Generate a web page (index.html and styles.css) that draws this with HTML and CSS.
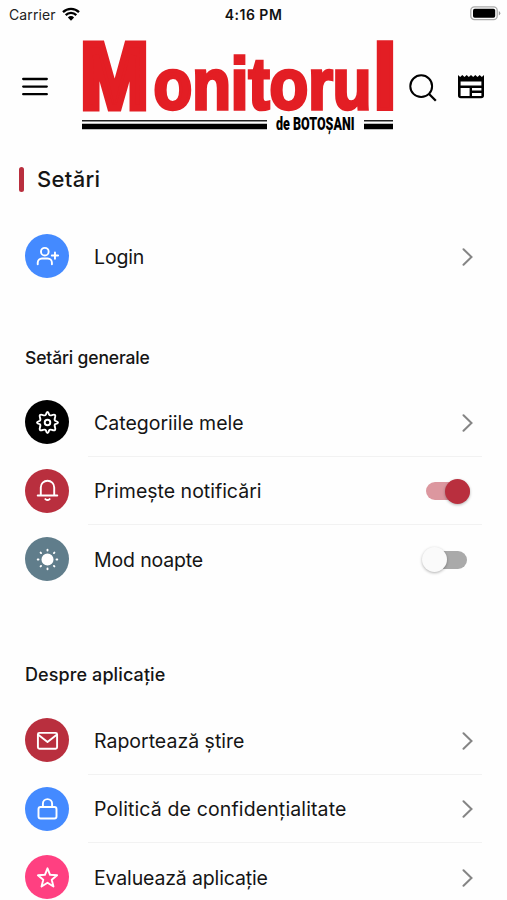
FILE: index.html
```html
<!DOCTYPE html>
<html lang="ro">
<head>
<meta charset="utf-8">
<title>Setări</title>
<link rel="stylesheet" href="styles.css">
</head>
<body>
<div class="screen">
  <div class="status">
    <div class="carrier">Carrier
      <svg width="18" height="14" viewBox="0 0 18 14"><path d="M1 5.1a11.4 11.4 0 0 1 16 0M3.7 8.1a7.5 7.5 0 0 1 10.6 0" fill="none" stroke="#000" stroke-width="2.3"/><path d="M9 13.7 5.9 10.4a4.4 4.4 0 0 1 6.2 0Z"/></svg>
    </div>
    <div class="clock">4:16 PM</div>
    <svg class="battery" width="31" height="15" viewBox="0 0 31 15"><rect x=".8" y=".8" width="26.4" height="12.8" rx="3.6" fill="#fff" stroke="#aaa" stroke-width="1.3"/><rect x="3" y="2.7" width="22.2" height="9" rx="1.7"/><path d="M28.8 5v4.5q1.5-.7 1.5-2.2T28.8 5Z" fill="#999"/></svg>
  </div>

  <header class="header">
    <svg class="menu" width="26" height="20" viewBox="0 0 26 20"><path d="M1.2 2h23.6M1.2 9.6h23.6M1.2 17.2h23.6" stroke="#000" stroke-width="2.3" stroke-linecap="round"/></svg>
    <svg class="logo" width="314" height="98" viewBox="0 0 314 98">
      <text class="brand"><tspan class="brand-m" x="-.5" y="69.5" textLength="68" lengthAdjust="spacingAndGlyphs">M</tspan><tspan class="brand-mid" x="72.5" y="71.3" textLength="218" lengthAdjust="spacingAndGlyphs">onitoru</tspan><tspan class="brand-l" x="291" y="71.3" textLength="26" lengthAdjust="spacingAndGlyphs">l</tspan></text>
      <path d="M1 82.7h185M283 82.7h29" stroke="#222" stroke-width="1.6"/>
      <path d="M1 88.5h185M283 88.5h29" stroke="#000" stroke-width="5.4"/>
      <text class="place" x="195" y="92" textLength="78.5" lengthAdjust="spacingAndGlyphs">de BOTOŞANI</text>
    </svg>
    <svg class="search" width="28" height="28" viewBox="0 0 28 28"><g fill="none" stroke="#000" stroke-width="2"><circle cx="12.2" cy="12.2" r="10.9"/><path d="m19.8 19.8 7 7" stroke-width="2.3"/></g></svg>
    <svg class="paper" width="26" height="24" viewBox="0 0 26 24"><path d="M0 0 2.2 2 4.3 0 6.5 2 8.7 0 10.8 2 13 0l2.2 2 2.1-2 2.2 2 2.2-2 2.1 2L26 0v20.5a2.8 2.8 0 0 1-2.8 2.8H2.8A2.8 2.8 0 0 1 0 20.5Z"/><path d="M2.6 6.5h20.8v4H2.6ZM2.6 13h9v8h-9ZM14 13h9.4v2.6H14ZM14 18h9.4v3H14Z" fill="#fff"/></svg>
  </header>

  <h1 class="title">Setări</h1>

  <section class="group account">
    <div class="row">
      <span class="badge blue"><svg viewBox="0 0 24 24"><circle cx="9.2" cy="7" r="4"/><path d="M1.8 20v-1.6a4.4 4.4 0 0 1 4.4-4.4h6a4.4 4.4 0 0 1 4.4 4.4V20M19.8 7.7v6.6M16.5 11h6.6"/></svg></span>
      <div class="line"><span class="label login">Login</span><svg class="chevron" viewBox="0 0 11 18"><path d="m1.5 1.2 8 7.8-8 7.8"/></svg></div>
    </div>
  </section>

  <section class="group general">
    <h2 class="heading">Setări generale</h2>
    <div class="row">
      <span class="badge black"><svg viewBox="0 0 24 24"><circle cx="12" cy="12" r="2.9"/><path d="M10.3 3.8Q12-1.8 13.7 3.8 14.3 5 16.6 4.3 21.5 2.5 19.7 7.4 19 9.7 20.2 10.3 25.8 12 20.2 13.7 19 14.3 19.7 16.6 21.5 21.5 16.6 19.7 14.3 19 13.7 20.2 12 25.8 10.3 20.2 9.7 19 7.4 19.7 2.5 21.5 4.3 16.6 5 14.3 3.8 13.7-1.8 12 3.8 10.3 5 9.7 4.3 7.4 2.5 2.5 7.4 4.3 9.7 5 10.3 3.8Z"/></svg></span>
      <div class="line"><span class="label categories">Categoriile mele</span><svg class="chevron" viewBox="0 0 11 18"><path d="m1.5 1.2 8 7.8-8 7.8"/></svg></div>
    </div>
    <div class="row">
      <span class="badge red"><svg viewBox="0 0 24 24"><path d="M5 17V8.8a7 7 0 0 1 14 0V17M1.8 17.2h20.4M9.8 21q2.2 2 4.4 0"/></svg></span>
      <div class="line"><span class="label notify">Primește notificări</span><span class="switch on"></span></div>
    </div>
    <div class="row">
      <span class="badge slate"><svg viewBox="0 0 24 24"><circle cx="12" cy="12" r="5.3" fill="#fff"/><path d="M12 1.8v.8M12 21.4v.8M1.8 12h.8M21.4 12h.8M4.8 4.8l.5.5M18.7 18.7l.5.5M4.8 19.2l.5-.5M18.7 5.3l.5-.5"/></svg></span>
      <div class="line"><span class="label night">Mod noapte</span><span class="switch off"></span></div>
    </div>
  </section>

  <section class="group about">
    <h2 class="heading">Despre aplicație</h2>
    <div class="row">
      <span class="badge red"><svg viewBox="0 0 24 24"><rect x="2" y="4" width="20" height="16.6" rx="1.5"/><path d="m2.4 6 9.6 7.5L21.6 6"/></svg></span>
      <div class="line"><span class="label report">Raportează știre</span><svg class="chevron" viewBox="0 0 11 18"><path d="m1.5 1.2 8 7.8-8 7.8"/></svg></div>
    </div>
    <div class="row">
      <span class="badge blue"><svg viewBox="0 0 24 24"><rect x="2.6" y="10.5" width="18.8" height="12" rx="2.2"/><path d="M7.2 10.5V7a4.8 4.8 0 0 1 9.6 0v3.5"/></svg></span>
      <div class="line"><span class="label privacy">Politică de confidențialitate</span><svg class="chevron" viewBox="0 0 11 18"><path d="m1.5 1.2 8 7.8-8 7.8"/></svg></div>
    </div>
    <div class="row">
      <span class="badge pink"><svg viewBox="0 0 24 24"><path d="M12 2.4 14.7 9.2 22 9.7 16.4 14.3 18.2 21.4 12 17.5 5.8 21.4 7.6 14.3 2 9.7 9.3 9.2Z"/></svg></span>
      <div class="line"><span class="label rate">Evaluează aplicație</span><svg class="chevron" viewBox="0 0 11 18"><path d="m1.5 1.2 8 7.8-8 7.8"/></svg></div>
    </div>
  </section>
</div>
</body>
</html>
```
FILE: styles.css
```css
* { box-sizing: border-box; }
body { margin: 0; background: #fefefe; color: #151515; font-family: Inter, "Liberation Sans", sans-serif; }
svg { display: block; flex: none; }
.screen { width: 507px; height: 900px; overflow: hidden; }

.status { display: grid; grid-template-columns: 1fr auto 1fr; height: 28px; align-items: center; padding: 0 6px 0 9px; }
.carrier { display: flex; align-items: center; gap: 6px; font-size: 14px; letter-spacing: .1px; color: #222; }
.clock { margin-right: 3px; font-size: 14px; font-weight: 600; letter-spacing: .5px; color: #111; }
.battery { justify-self: end; margin-top: -2px; }

.header { display: flex; align-items: flex-start; height: 112px; padding: 10px 0 0 22px; }
.menu { margin-top: 39px; }
.logo { margin-left: 33px; overflow: visible; }
.brand { fill: #e31e24; stroke: #e31e24; stroke-width: 3.5; font-family: "Liberation Sans", sans-serif; font-weight: 700; }
.brand-m { font-size: 93px; stroke-width: 7; }
.brand-mid { font-size: 73px; }
.brand-l { font-size: 93px; }
.place { font-family: Roboto, sans-serif; font-size: 17.5px; font-weight: 900; }
.search { margin: 36px 0 0 14px; }
.paper { margin: 37px 0 0 21px; }

.title { display: flex; align-items: center; gap: 13px; height: 26px; margin: 26px 0 0 19px; font-size: 22px; font-weight: 500; letter-spacing: .3px; }
.title::before { content: ""; width: 5px; height: 25px; border-radius: 3px; background: #b92f3e; }

.group { padding: 0 25px; }
.account { margin-top: 30px; }
.general { margin-top: 57.5px; }
.about { margin-top: 71.5px; }
.heading { height: 19px; margin: 0 0 21px; font-size: 17.5px; line-height: 19px; font-weight: 500; letter-spacing: -.15px; white-space: nowrap; }
.about .heading { margin-bottom: 22px; font-size: 18px; letter-spacing: .1px; }

.row { display: flex; align-items: center; height: 68.5px; }
.badge { flex: none; display: flex; align-items: center; justify-content: center; width: 44px; height: 44px; border-radius: 50%; }
.badge svg { width: 23px; height: 23px; fill: none; stroke: #fff; stroke-width: 2; stroke-linejoin: round; stroke-linecap: round; }
.blue { background: #448aff; }
.black { background: #000; }
.red { background: #b92f3e; }
.slate { background: #607d8b; }
.pink { background: #ff4081; }
.line { flex: 1; display: flex; align-items: center; justify-content: space-between; height: 100%; margin-left: 19px; padding: 2px 9px 0 6px; border-bottom: 1px solid #f2f2f2; }
.account .line, .row:last-child .line { border-bottom-color: transparent; }
.account .line { padding-top: 3px; }
.label { font-size: 19.5px; white-space: nowrap; }
.login, .night, .rate { letter-spacing: -.15px; }
.privacy { letter-spacing: .13px; }
.chevron { width: 11px; height: 18px; fill: none; stroke: #858585; stroke-width: 2; stroke-linecap: round; }

.switch { display: flex; align-items: center; width: 43px; height: 18px; border-radius: 9px; }
.switch::before { content: ""; width: 25px; height: 25px; border-radius: 50%; box-shadow: 0 1px 3px rgba(0,0,0,.3); }
.on { justify-content: flex-end; width: 44px; margin-right: 3px; background: #dc979f; }
.on::before { background: #b92f3e; }
.off { margin-right: 6px; background: #aaa; }
.off::before { margin-left: -2px; background: #fafafa; }
```
